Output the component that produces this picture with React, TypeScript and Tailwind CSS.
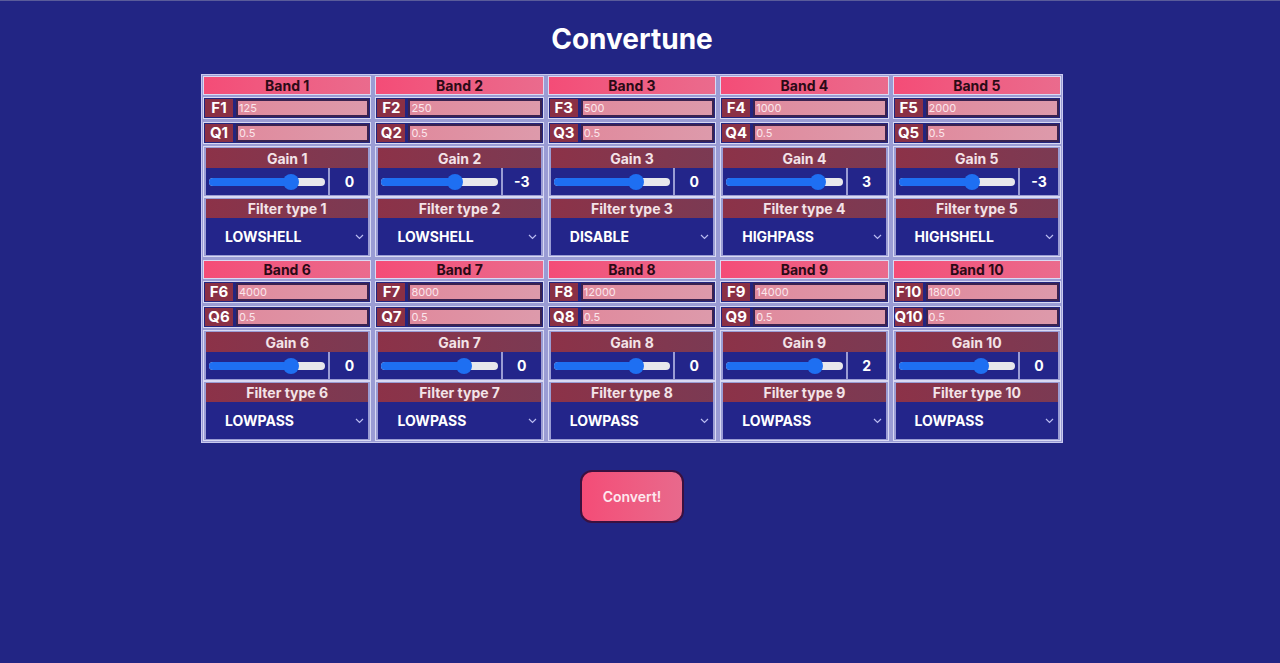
import React from 'react';

interface Band {
  freq: number;
  q: string;
  gain: number;
  type: string;
}

const bands: Band[] = [
  { freq: 125, q: '0.5', gain: 0, type: 'LOWSHELL' },
  { freq: 250, q: '0.5', gain: -3, type: 'LOWSHELL' },
  { freq: 500, q: '0.5', gain: 0, type: 'DISABLE' },
  { freq: 1000, q: '0.5', gain: 3, type: 'HIGHPASS' },
  { freq: 2000, q: '0.5', gain: -3, type: 'HIGHSHELL' },
  { freq: 4000, q: '0.5', gain: 0, type: 'LOWPASS' },
  { freq: 8000, q: '0.5', gain: 0, type: 'LOWPASS' },
  { freq: 12000, q: '0.5', gain: 0, type: 'LOWPASS' },
  { freq: 14000, q: '0.5', gain: 2, type: 'LOWPASS' },
  { freq: 18000, q: '0.5', gain: 0, type: 'LOWPASS' },
];

const GAIN_MIN = -24;
const GAIN_MAX = 9;

function ParamRow({ label, value }: { label: string; value: string }) {
  return (
    <div className="flex h-[22px] gap-[3px] border border-[#d9daf3] bg-[#23257f] p-[1px]">
      <div className="flex w-[28px] items-center justify-center bg-[#8a3045] text-[15px] font-bold text-white">
        {label}
      </div>
      <div className="flex flex-1 items-center border-2 border-[#3a2350] bg-gradient-to-r from-[#e08a9d] to-[#dd9aab] px-[1px] text-[11px] text-[#fbe6ec]">
        {value}
      </div>
    </div>
  );
}

function Slider({ gain }: { gain: number }) {
  const pct = ((gain - GAIN_MIN) / (GAIN_MAX - GAIN_MIN)) * 100;
  return (
    <div className="relative mx-[3px] h-[16px] flex-1">
      <div className="absolute left-0 right-0 top-[4px] h-[8px] rounded-full bg-[#e8e8ec]" />
      <div
        className="absolute left-0 top-[4px] h-[8px] rounded-full bg-[#1e6ff2]"
        style={{ width: `calc(${pct}% * 0.88 + 8px)` }}
      />
      <div
        className="absolute top-0 h-[16px] w-[16px] rounded-full bg-[#1e6ff2]"
        style={{ left: `calc(${pct}% * 0.88 + 8px - 8px)` }}
      />
    </div>
  );
}

function BandCell({ band, n }: { band: Band; n: number }) {
  return (
    <div className="flex flex-col">
      <div className="flex h-[19px] items-center justify-center border border-[#d9daf3] bg-gradient-to-r from-[#f44c77] to-[#ea6b8d] text-[14px] font-bold text-[#2b0a16]">
        Band {n}
      </div>
      <div className="mt-[2px]">
        <ParamRow label={`F${n}`} value={String(band.freq)} />
      </div>
      <div className="mt-[3px]">
        <ParamRow label={`Q${n}`} value={band.q} />
      </div>
      <div className="mt-[2px] flex flex-col border border-[#d9daf3] bg-[#9a9cd4] px-[2px] py-[1px]">
        <div className="flex h-[20px] items-center justify-center bg-gradient-to-r from-[#8c3248] to-[#7b3a53] text-[14px] font-bold text-[#f3e3e8]">
          Gain {n}
        </div>
        <div className="flex h-[27px] bg-[#23258a]">
          <div className="flex flex-1 items-center">
            <Slider gain={band.gain} />
          </div>
          <div className="flex w-[40px] items-center justify-center border-l-2 border-[#9a9cd4] text-[14px] font-bold text-white">
            {band.gain}
          </div>
        </div>
      </div>
      <div className="flex flex-col border border-[#d9daf3] bg-[#9a9cd4] px-[2px] py-[1px]">
        <div className="flex h-[19px] items-center justify-center bg-gradient-to-r from-[#8c3248] to-[#7b3a53] text-[14px] font-bold text-[#f3e3e8]">
          Filter type {n}
        </div>
        <div className="flex h-[37px] items-center justify-between bg-[#23258a] pl-[19px] pr-[4px] text-[14px] font-bold text-white">
          <span>{band.type}</span>
          <svg width="9" height="6" viewBox="0 0 9 6" fill="none">
            <path d="M1 1l3.5 3.5L8 1" stroke="#b9bbf0" strokeWidth="1.2" />
          </svg>
        </div>
      </div>
    </div>
  );
}

export default function App() {
  return (
    <div
      className="flex min-h-[663px] w-full flex-col items-center border-t border-[#5a5c9a] bg-[#222584] pr-[16px]"
      style={{ fontFamily: 'Inter, "Noto Sans", sans-serif' }}
    >
      <h1 className="mt-[20px] text-[28px] font-bold leading-[36px] text-white">Convertune</h1>
      <div className="mt-[17px] grid w-[862px] grid-cols-5 gap-x-[4px] gap-y-[3px] border border-[#c9caef] bg-[#9a9cd4] p-[1px]">
        {bands.map((b, i) => (
          <BandCell key={i} band={b} n={i + 1} />
        ))}
      </div>
      <button className="mt-[27px] h-[53px] w-[104px] rounded-[12px] border-2 border-[#3a1040] bg-gradient-to-r from-[#f44c77] to-[#e8698c] text-[14px] font-semibold text-[#fde8ee]">
        Convert!
      </button>
    </div>
  );
}
